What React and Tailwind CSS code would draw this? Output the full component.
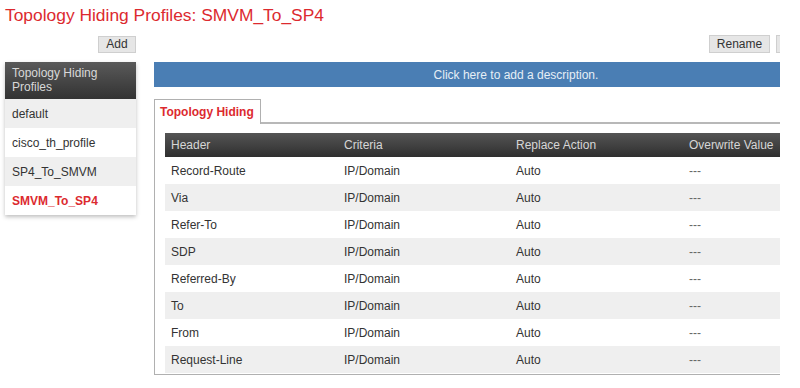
import React from 'react';

const profiles = [
    { name: 'default', bg: 'bg-[#efefef]' },
    { name: 'cisco_th_profile', bg: 'bg-white' },
    { name: 'SP4_To_SMVM', bg: 'bg-[#efefef]' },
    { name: 'SMVM_To_SP4', bg: 'bg-white', active: true },
];

const rows = ['Record-Route', 'Via', 'Refer-To', 'SDP', 'Referred-By', 'To', 'From', 'Request-Line'];

const cols = 'grid grid-cols-[173px_172px_173px_173px]';

const App = () => {
    return (
        <div className="w-[800px] h-[388px] bg-white overflow-hidden px-[5px] pt-[5px] font-['Liberation_Sans',Arial,sans-serif] text-[12px] text-[#333]">
            <h1 className="h-[21px] text-[17.4px] leading-[21px] text-[#dc2a2f]">Topology Hiding Profiles: SMVM_To_SP4</h1>

            <div className="flex mt-[9px]">
                {/* sidebar */}
                <div className="w-[131px] shrink-0 flex flex-col">
                    <button className="self-end mt-[1px] h-[17px] w-[38px] bg-[#e6e6e6] border border-[#cfcfcf] text-[12px] leading-[15px] text-[#333]">Add</button>
                    <div className="mt-[9px] shadow-[0_2px_4px_rgba(0,0,0,0.25)]">
                        <div className="h-[37px] px-[7px] pt-[4px] bg-gradient-to-b from-[#5a5a5a] to-[#333] text-[#d8d8d8] leading-[14px]">
                            Topology Hiding<br />Profiles
                        </div>
                        {profiles.map((p) => (
                            <div key={p.name} className={`h-[29px] px-[7px] flex items-center ${p.bg} ${p.active ? 'text-[#dc2a2f] font-bold' : 'text-[#333]'}`}>
                                {p.name}
                            </div>
                        ))}
                    </div>
                </div>

                {/* main */}
                <div className="ml-[18px] w-[626px] shrink-0 overflow-hidden">
                    <div className="w-[724px]">
                        <div className="flex h-[18px] pl-[555px]">
                            <button className="shrink-0 h-[18px] w-[61px] bg-[#e6e6e6] border border-[#cfcfcf] text-[12px] leading-[16px] text-[#333]">Rename</button>
                            <button aria-label="Delete" className="shrink-0 ml-[6px] h-[18px] w-[60px] bg-[#e6e6e6] border border-[#cfcfcf]"></button>
                        </div>

                        <div className="mt-[9px] h-[25px] bg-[#4a7eb4] flex items-center justify-center text-[#e6eef6]">
                            Click here to add a description.
                        </div>

                        <div className="mt-[12px] flex">
                            <div className="h-[25px] w-[107px] border-t border-l border-r border-[#b0b0b0] bg-white flex items-center px-[5px] whitespace-nowrap font-bold text-[#dc2a2f]">
                                Topology Hiding
                            </div>
                            <div className="flex-1 border-b-2 border-[#b8b8b8]"></div>
                        </div>

                        <div className="border-l border-b border-r border-[#b0b0b0] pl-[10px] pt-[9px] pb-[1px] w-[720px]">
                            <div className={`${cols} h-[24px] items-center bg-gradient-to-b from-[#555] to-[#2f2f2f] text-[#d6d6d6]`}>
                                <div className="pl-[6px]">Header</div>
                                <div className="pl-[6px]">Criteria</div>
                                <div className="pl-[6px]">Replace Action</div>
                                <div className="pl-[6px]">Overwrite Value</div>
                            </div>
                            {rows.map((r, i) => (
                                <div key={r} className={`${cols} h-[27px] items-center ${i % 2 ? 'bg-[#efefef]' : 'bg-white'}`}>
                                    <div className="pl-[6px]">{r}</div>
                                    <div className="pl-[6px]">IP/Domain</div>
                                    <div className="pl-[6px]">Auto</div>
                                    <div className="pl-[6px] text-[#666]">---</div>
                                </div>
                            ))}
                        </div>
                    </div>
                </div>
            </div>
        </div>
    );
};

export default App;
